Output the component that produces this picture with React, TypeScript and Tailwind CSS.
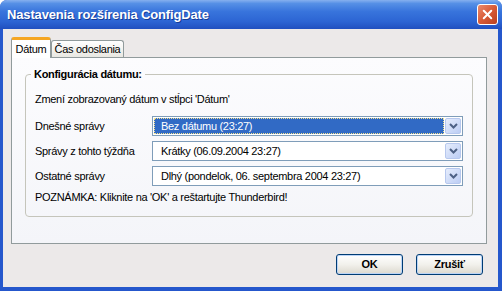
import { X } from "lucide-react";

const ROWS = [
  { label: "Dnešné správy", value: "Bez dátumu (23:27)", focused: true },
  { label: "Správy z tohto týždňa", value: "Krátky (06.09.2004 23:27)", focused: false },
  { label: "Ostatné správy", value: "Dlhý (pondelok, 06. septembra 2004 23:27)", focused: false },
];

function Chevron() {
  return (
    <svg width="9" height="6" viewBox="0 0 9 6">
      <polyline points="1,1 4.5,4.5 8,1" fill="none" stroke="#4d6185" strokeWidth="2" />
    </svg>
  );
}

function Combo({ value, focused }: { value: string; focused: boolean }) {
  return (
    <div className="flex h-[20px] w-[311px] items-stretch border border-[#7f9db9] bg-white p-px">
      <div
        className={
          focused
            ? "flex flex-1 items-center bg-[#316ac5] pl-[7px] text-white outline-1 outline-dotted outline-[#f2e18c] -outline-offset-1"
            : "flex flex-1 items-center pl-[7px]"
        }
      >
        {value}
      </div>
      <div className="ml-px flex w-[16px] items-center justify-center rounded-[2px] border border-[#b7c8ee] bg-gradient-to-br from-[#e6edfc] to-[#bccdf4]">
        <Chevron />
      </div>
    </div>
  );
}

function XpButton({ children }: { children: string }) {
  return (
    <button className="flex h-[21px] w-[67px] items-center justify-center rounded-[3px] border border-[#003c74] bg-gradient-to-b from-white via-[#f2f1ec] to-[#dcd8ce] font-bold shadow-[inset_0_0_0_1px_#bcd4f6]">
      {children}
    </button>
  );
}

export default function App() {
  return (
    <div className="flex h-[291px] w-[502px] flex-col overflow-hidden rounded-t-[7px] bg-[#2557cc] font-['Liberation_Sans',Arial,sans-serif] text-[11px] tracking-[-0.3px] text-black">
      <div className="flex h-[29px] items-center justify-between bg-[linear-gradient(to_bottom,#86b0ef_0%,#5690e6_12%,#3874dc_40%,#2c64d3_75%,#204fbf_100%)] pl-[7px] pr-[4px]">
        <span className="text-[13px] font-bold tracking-[-0.15px] text-white [text-shadow:1px_1px_0_#153c96]">
          Nastavenia rozšírenia ConfigDate
        </span>
        <div className="flex h-[21px] w-[21px] items-center justify-center rounded-[3px] border border-white bg-gradient-to-br from-[#eb8a6c] via-[#d85a36] to-[#b8401f]">
          <X size={15} strokeWidth={3.2} className="text-white" />
        </div>
      </div>

      <div className="mb-[4px] ml-[3px] mr-[4px] flex flex-1 flex-col bg-[#ece9e9] pl-[8px] pr-[11px] pt-[8px]">
        <div className="flex h-[20px] items-end">
          <div className="relative z-10 -mb-px flex h-[21px] w-[40px] items-center justify-center rounded-t-[3px] border-x border-t-[3px] border-x-[#919b9c] border-t-[#f5a623] bg-white pt-px">
            Dátum
          </div>
          <div className="flex h-[17px] w-[73px] items-center justify-center rounded-t-[3px] border-x border-t border-[#919b9c] bg-gradient-to-b from-white to-[#e9e8e2]">
            Čas odoslania
          </div>
        </div>

        <div className="h-[187px] border border-[#919b9c] bg-gradient-to-b from-[#fcfcfe] to-[#f4f5f9] px-[13px]">
          <fieldset className="mt-[10px] rounded-[4px] border border-[#c5c5bb] pb-[12px] pl-[9px] pr-[9px]">
            <legend className="-ml-[4px] px-[3px] font-bold leading-[13px]">Konfigurácia dátumu:</legend>
            <div className="mt-[11px] leading-[14px]">Zmení zobrazovaný dátum v stĺpci 'Dátum'</div>
            <div className="mt-[10px] flex flex-col gap-[5px]">
              {ROWS.map((r) => (
                <div key={r.label} className="flex items-center">
                  <span className="w-[117px]">{r.label}</span>
                  <Combo value={r.value} focused={r.focused} />
                </div>
              ))}
            </div>
            <div className="mt-[5px] leading-[13px]">POZNÁMKA: Kliknite na 'OK' a reštartujte Thunderbird!</div>
          </fieldset>
        </div>

        <div className="mt-[10px] flex justify-end gap-[13px] pr-[4px]">
          <XpButton>OK</XpButton>
          <XpButton>Zrušiť</XpButton>
        </div>
      </div>
    </div>
  );
}
